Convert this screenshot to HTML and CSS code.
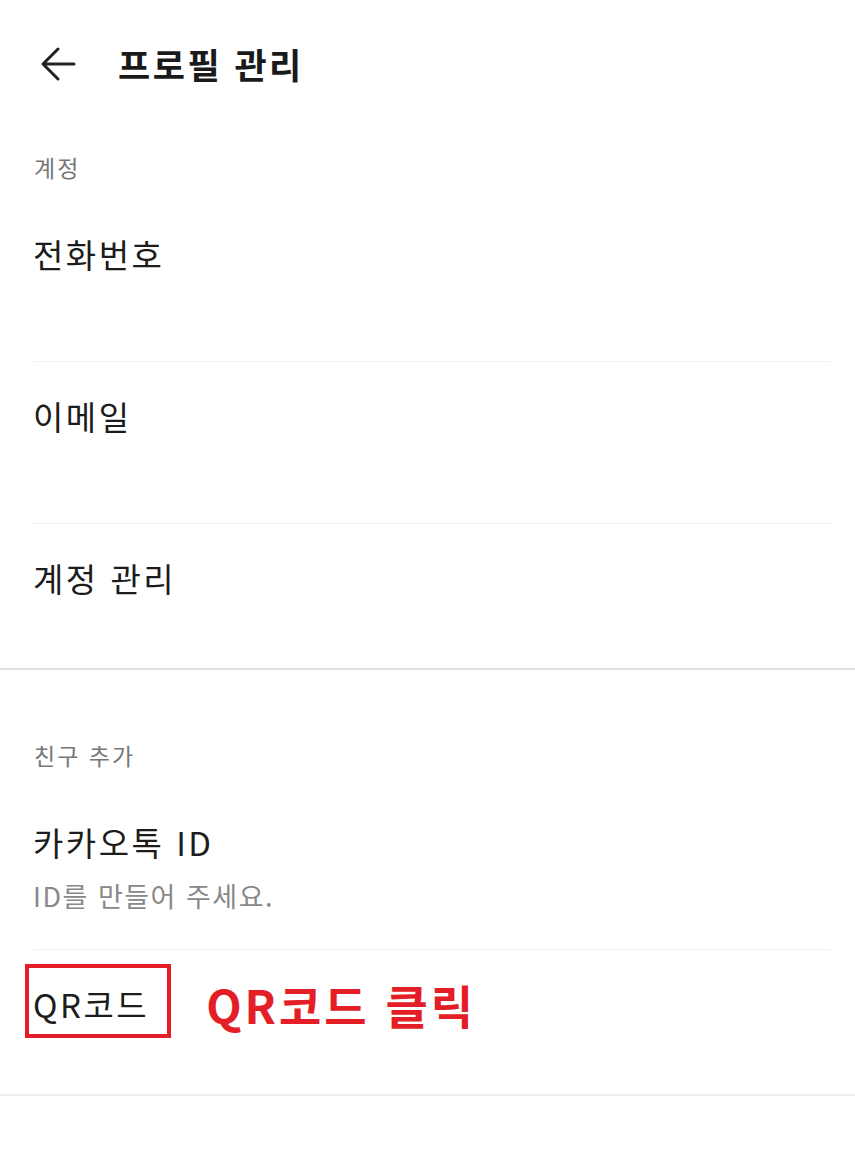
FILE: index.html
```html
<!DOCTYPE html>
<html lang="ko">
<head>
    <meta charset="UTF-8">
    <title>프로필 관리</title>
    <link rel="stylesheet" href="styles.css">
</head>
<body>
    <div class="header">
        <span class="back-btn">
            <svg width="36" height="34" viewBox="0 0 36 34">
                <path d="M34 17H3M18 2L3 17L18 32" fill="none" stroke="#222" stroke-width="3" stroke-linecap="round" stroke-linejoin="round"/>
            </svg>
        </span>
        <h1 class="title">프로필 관리</h1>
    </div>

    <div class="section">
        <div class="section-label">계정</div>
        <div class="row">
            <div class="row-title">전화번호</div>
        </div>
        <div class="row">
            <div class="row-title">이메일</div>
        </div>
        <div class="row">
            <div class="row-title">계정 관리</div>
        </div>
    </div>

    <div class="section">
        <div class="section-label">친구 추가</div>
        <div class="row">
            <div class="row-title">카카오톡 ID</div>
            <div class="row-sub">ID를 만들어 주세요.</div>
        </div>
        <div class="row row-qr">
            <span class="row-title marked">QR코드</span>
            <span class="note">QR코드 클릭</span>
        </div>
    </div>
</body>
</html>
```

FILE: styles.css
```css
body {
    margin: 0;
    background-color: #fff;
    font-family: 'Noto Sans CJK KR', 'Noto Sans', sans-serif;
    color: #1c1c1c;
}
.header {
    display: flex;
    align-items: center;
    height: 128px;
}
.back-btn {
    display: flex;
    margin-left: 40px;
    width: 36px;
    height: 34px;
}
.title {
    margin: 0 0 0 42px;
    font-size: 35px;
    font-weight: bold;
    line-height: 44px;
    letter-spacing: 2.5px;
    color: #1a1a1a;
}
.section {
    padding-top: 24px;
    border-bottom: 2px solid #e2e2e2;
}
.section + .section {
    padding-top: 70px;
}
.section:last-child {
    border-bottom-color: #eeeeee;
}
.section-label {
    margin-left: 34px;
    font-size: 23px;
    line-height: 30px;
    letter-spacing: 2px;
    color: #777;
    margin-bottom: 18px;
}
.row {
    margin: 0 25px 0 33px;
    padding: 32px 0 35px;
    min-height: 94px;
    border-bottom: 1px solid #f0f0f0;
}
.row:last-child {
    border-bottom: none;
    min-height: 0;
    padding-bottom: 68px;
}
.row-title {
    font-size: 33px;
    line-height: 44px;
    letter-spacing: 2.5px;
}
.row-sub {
    margin-top: 14px;
    font-size: 27px;
    line-height: 36px;
    letter-spacing: 1.5px;
    color: #888;
}
.row-qr {
    display: flex;
    align-items: center;
}
.marked {
    position: relative;
}
.marked::after {
    content: '';
    position: absolute;
    top: -18px;
    left: -8px;
    right: -22px;
    bottom: -12px;
    border: 4px solid #e31e26;
}
.note {
    margin-left: 57px;
    font-size: 46px;
    font-weight: bold;
    line-height: 44px;
    color: #e31e26;
    letter-spacing: 3px;
}
```
